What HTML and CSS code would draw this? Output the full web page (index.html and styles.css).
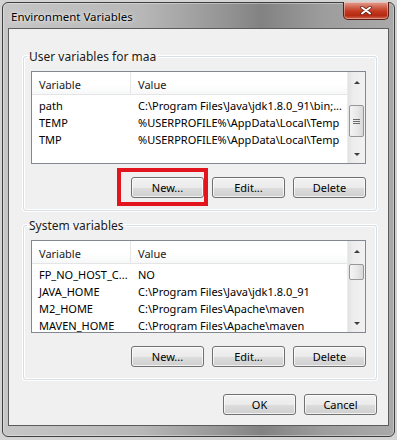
FILE: index.html
```html
<!DOCTYPE html>
<html>
  <head>
    <title>Environment Variables</title>
    <meta name="viewport" content="width=device-width, initial-scale=1">
    <link rel="stylesheet" href="styles.css">
  </head>
  <body>
    <div class="window">
      <div class="titlebar">
        <span class="title">Environment Variables</span>
        <button class="close" aria-label="Close">
          <svg width="12" height="9" viewBox="0 0 12 9">
            <path d="M2 1.5 L10 7.5 M10 1.5 L2 7.5" stroke="#5a1a10" stroke-width="3.4" stroke-linecap="round"/>
            <path d="M2 1.5 L10 7.5 M10 1.5 L2 7.5" stroke="#fff" stroke-width="2" stroke-linecap="round"/>
          </svg>
        </button>
      </div>
      <div class="client">
        <fieldset class="group">
          <legend>User variables for maa</legend>
          <div class="listbox">
            <div class="list">
              <div class="list-head">
                <span class="col-var">Variable</span>
                <span class="col-val">Value</span>
              </div>
              <div class="rows">
                <div class="row"><span class="col-var">path</span><span class="col-val">C:\Program Files\Java\jdk1.8.0_91\bin;...</span></div>
                <div class="row"><span class="col-var">TEMP</span><span class="col-val">%USERPROFILE%\AppData\Local\Temp</span></div>
                <div class="row"><span class="col-var">TMP</span><span class="col-val">%USERPROFILE%\AppData\Local\Temp</span></div>
              </div>
            </div>
            <div class="scrollbar">
              <span class="arrow arrow-up"></span>
              <span class="track"><span class="thumb thumb-user"><span class="grip"></span></span></span>
              <span class="arrow arrow-down"></span>
            </div>
          </div>
          <div class="buttons">
            <span class="marked">
              <button class="btn">New...</button>
              <span class="highlight"></span>
            </span>
            <button class="btn">Edit...</button>
            <button class="btn">Delete</button>
          </div>
        </fieldset>

        <fieldset class="group group-system">
          <legend>System variables</legend>
          <div class="listbox">
            <div class="list">
              <div class="list-head">
                <span class="col-var">Variable</span>
                <span class="col-val">Value</span>
              </div>
              <div class="rows">
                <div class="row"><span class="col-var">FP_NO_HOST_C...</span><span class="col-val">NO</span></div>
                <div class="row"><span class="col-var">JAVA_HOME</span><span class="col-val">C:\Program Files\Java\jdk1.8.0_91</span></div>
                <div class="row"><span class="col-var">M2_HOME</span><span class="col-val">C:\Program Files\Apache\maven</span></div>
                <div class="row"><span class="col-var">MAVEN_HOME</span><span class="col-val">C:\Program Files\Apache\maven</span></div>
              </div>
            </div>
            <div class="scrollbar">
              <span class="arrow arrow-up"></span>
              <span class="track"><span class="thumb thumb-system"></span></span>
              <span class="arrow arrow-down"></span>
            </div>
          </div>
          <div class="buttons">
            <button class="btn">New...</button>
            <button class="btn">Edit...</button>
            <button class="btn">Delete</button>
          </div>
        </fieldset>

        <div class="buttons dialog-buttons">
          <button class="btn">OK</button>
          <button class="btn">Cancel</button>
        </div>
      </div>
    </div>
  </body>
</html>
```

FILE: styles.css
```css
body {
  margin: 0;
  background-color: #d4d4d4;
  font-family: "Noto Sans", "Open Sans", sans-serif;
  font-size: 11px;
  color: #1a1a1a;
}
.window {
  margin: 2px 0 0 2px;
  width: 381px;
  height: 429px;
  padding: 0 5px 4px 5px;
  border: 1px solid #3f3f3f;
  border-radius: 6px;
  background: linear-gradient(90deg, #c6c6c6 0%, #b8b8b8 35%, #929292 58%, #828282 66%, #9d9d9d 82%, #a9a9a9 100%);
  box-shadow: inset 0 0 0 1px rgba(255, 255, 255, 0.35);
}
.titlebar {
  display: flex;
  justify-content: space-between;
  align-items: flex-start;
  height: 25px;
}
.title {
  margin: 6px 0 0 3px;
  font-size: 11.5px;
  line-height: 15px;
  color: #000;
  text-shadow: 0 0 6px rgba(255, 255, 255, 0.9), 0 0 2px rgba(255, 255, 255, 0.8);
}
.close {
  margin-top: -1px;
  width: 46px;
  height: 18px;
  padding: 0;
  display: flex;
  align-items: center;
  justify-content: center;
  border: 1px solid #5e1c12;
  border-top: 0;
  border-radius: 0 0 5px 5px;
  background: linear-gradient(180deg, #e2a193 0%, #d0654f 30%, #c2391f 55%, #b52a12 80%, #cf6a50 100%);
  box-shadow: inset 0 0 0 1px rgba(255, 255, 255, 0.35);
}
.client {
  height: 398px;
  padding: 20px 11px 0 14px;
  box-sizing: border-box;
  border: 1px solid #5c5c5c;
  background-color: #f0f0f0;
}
.group {
  margin: 0;
  padding: 7px 10px 12px 7px;
  min-width: 0;
  border: 1px solid #d5dfe5;
  border-radius: 3px;
  box-shadow: inset 0 0 0 1px #fff, 0 0 0 1px #fff;
}
.group legend {
  margin-left: -4px;
  padding: 0 2px;
  font-size: 12px;
  line-height: 15px;
}
.group-system {
  margin-top: 7px;
}
.listbox {
  display: flex;
  height: 93px;
  box-sizing: border-box;
  border: 1px solid #828790;
  background-color: #fff;
}
.list {
  flex: 1;
  min-width: 0;
  overflow: hidden;
}
.list-head {
  display: flex;
  height: 23px;
  box-sizing: border-box;
  border-bottom: 1px solid #e5e5e5;
  background: linear-gradient(180deg, #fff 0%, #fff 60%, #f6f7f8 100%);
}
.list-head span {
  display: flex;
  align-items: center;
  padding-top: 2px;
}
.list-head .col-var {
  border-right: 1px solid #e5e5e5;
}
.rows {
  padding-top: 2px;
}
.row {
  display: flex;
  height: 17px;
  line-height: 17px;
  color: #000;
  white-space: nowrap;
}
.col-var {
  flex: none;
  width: 99px;
  padding-left: 7px;
  box-sizing: border-box;
  overflow: hidden;
}
.col-val {
  flex: none;
  padding-left: 7px;
}
.scrollbar {
  flex: none;
  width: 17px;
  display: flex;
  flex-direction: column;
  background: linear-gradient(90deg, #e2e2e2 0%, #ededed 30%, #f2f2f2 100%);
  border-left: 1px solid #ececec;
}
.arrow {
  display: flex;
  align-items: center;
  justify-content: center;
}
.arrow::before {
  content: "";
  border-left: 3px solid transparent;
  border-right: 3px solid transparent;
}
.arrow-up {
  height: 20px;
}
.arrow-up::before {
  border-bottom: 3px solid #3d3d3d;
}
.arrow-down {
  height: 18px;
}
.arrow-down::before {
  border-top: 3px solid #3d3d3d;
}
.track {
  flex: 1;
  display: flex;
  flex-direction: column;
}
.thumb {
  margin: 0 1px;
  border: 1px solid #979797;
  border-radius: 2px;
  box-sizing: border-box;
  background: linear-gradient(90deg, #f4f4f4 0%, #e9e9e9 50%, #d9d9d9 100%);
  display: flex;
  align-items: center;
  justify-content: center;
}
.thumb-user {
  margin-top: 13px;
  height: 32px;
}
.thumb-system {
  margin-top: 3px;
  height: 16px;
}
.grip {
  width: 7px;
  height: 5px;
  background: repeating-linear-gradient(180deg, #6b6b6b 0, #6b6b6b 1px, transparent 1px, transparent 2px);
}
.buttons {
  display: flex;
  justify-content: flex-end;
  gap: 8px;
  margin-top: 13px;
}
.dialog-buttons {
  margin-top: 14px;
}
.btn {
  width: 73px;
  height: 21px;
  padding: 0;
  font: inherit;
  color: #000;
  border: 1px solid #707070;
  border-radius: 3px;
  background: linear-gradient(180deg, #f2f2f2 0%, #ebebeb 50%, #dddddd 50%, #cfcfcf 100%);
  box-shadow: inset 0 0 0 1px rgba(255, 255, 255, 0.7);
}
.marked {
  position: relative;
  display: flex;
}
.highlight {
  position: absolute;
  left: -14px;
  top: -9px;
  right: -4px;
  bottom: -8px;
  border: 4px solid #e2151f;
}
```
